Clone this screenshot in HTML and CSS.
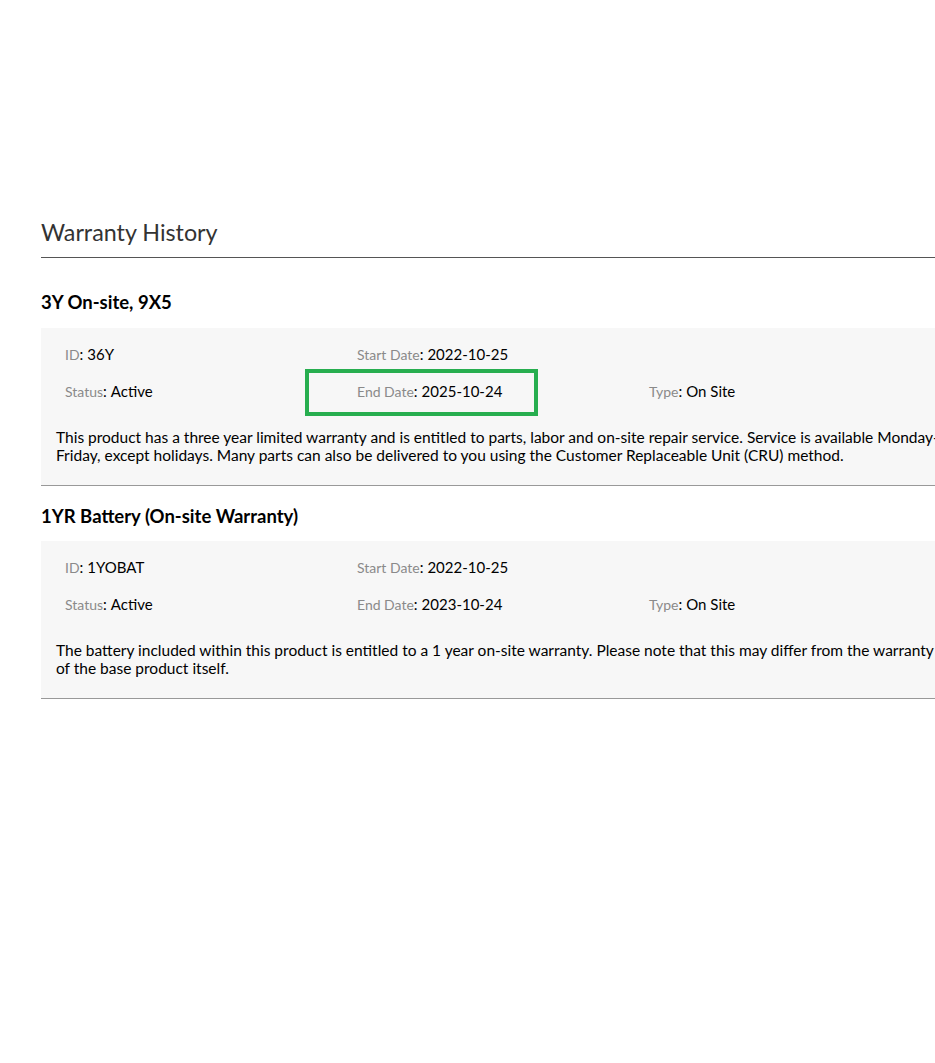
FILE: index.html
```html
<!DOCTYPE html>
<html lang="en">
<head>
    <meta charset="UTF-8">
    <title>Warranty History</title>
    <link rel="stylesheet" href="styles.css">
</head>
<body>

    <div class="page">
        <h2 class="page-title">Warranty History</h2>

        <div class="warranty first">
            <h3>3Y On-site, 9X5</h3>
            <div class="warranty-box">
                <div class="fields">
                    <div class="field"><span class="label">ID</span>:<span class="value">36Y</span></div>
                    <div class="field"><span class="label">Start Date</span>:<span class="value">2022-10-25</span></div>
                    <div class="field"></div>
                    <div class="field"><span class="label">Status</span>:<span class="value">Active</span></div>
                    <div class="field marked"><span class="label">End Date</span>:<span class="value">2025-10-24</span><span class="highlight"></span></div>
                    <div class="field"><span class="label">Type</span>:<span class="value">On Site</span></div>
                </div>
                <p class="desc">This product has a three year limited warranty and is entitled to parts, labor and on-site repair service. Service is available Monday-Friday, except holidays. Many parts can also be delivered to you using the Customer Replaceable Unit (CRU) method.</p>
            </div>
        </div>

        <div class="warranty">
            <h3>1YR Battery (On-site Warranty)</h3>
            <div class="warranty-box">
                <div class="fields">
                    <div class="field"><span class="label">ID</span>:<span class="value">1YOBAT</span></div>
                    <div class="field"><span class="label">Start Date</span>:<span class="value">2022-10-25</span></div>
                    <div class="field"></div>
                    <div class="field"><span class="label">Status</span>:<span class="value">Active</span></div>
                    <div class="field"><span class="label">End Date</span>:<span class="value">2023-10-24</span></div>
                    <div class="field"><span class="label">Type</span>:<span class="value">On Site</span></div>
                </div>
                <p class="desc">The battery included within this product is entitled to a 1 year on-site warranty. Please note that this may differ from the warranty of the base product itself.</p>
            </div>
        </div>
    </div>

</body>
</html>
```

FILE: styles.css
```css
body { font-family: Lato, "Open Sans", sans-serif; margin: 0; padding: 0; background-color: #fff; color: #111; overflow-x: hidden; }
.page { margin-left: 41px; width: 916px; padding-top: 218px; }
.page-title { font-size: 23.3px; font-weight: normal; line-height: 29px; color: #333; margin: 0; padding-bottom: 10px; border-bottom: 1px solid #555; }
.warranty h3 { font-size: 18.5px; font-weight: bold; line-height: 22px; margin: 19px 0 14px; color: #000; }
.warranty.first h3 { margin-top: 33px; margin-bottom: 15px; }
.warranty-box { background-color: #f7f7f7; padding: 16px 15px 21px; border-bottom: 1px solid #999; }
.fields { display: grid; grid-template-columns: 292px 292px 292px; row-gap: 16px; padding-left: 9px; }
.field { font-size: 15px; line-height: 21px; color: #000; }
.field .label { font-size: 14px; color: #8a8a8a; }
.field .value { margin-left: 4px; }
.marked { position: relative; }
.highlight { position: absolute; left: -52px; top: -12px; width: 233px; height: 47px; border: 4px solid #27ae4f; box-sizing: border-box; }
.desc { font-size: 15.5px; line-height: 18px; margin: 26px 0 0; color: #000; }
```
